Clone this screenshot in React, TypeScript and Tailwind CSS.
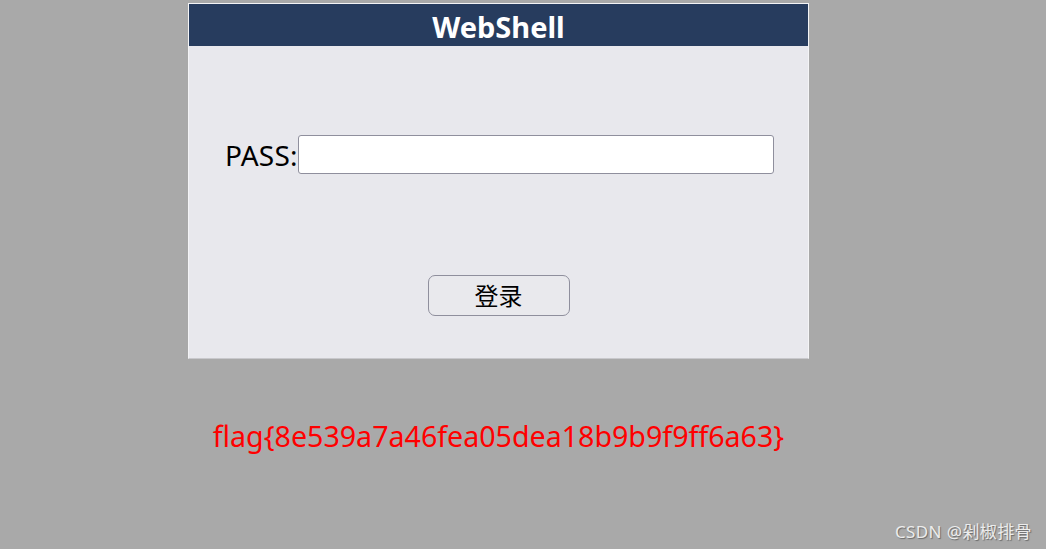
export default function App() {
  return (
    <div className="relative w-[1046px] h-[549px] overflow-hidden bg-[#a9a9a9] font-['Noto_Sans','Noto_Sans_CJK_SC',sans-serif]">
      <div className="ml-[188px] pt-[3px] w-[621px]">
        <div className="border border-[#f4f4f6] border-b-[#c8c8cc] bg-[#e8e8ed] h-[356px] flex flex-col">
          <div className="h-[42px] bg-[#273c5e] flex items-center justify-center">
            <h1 className="text-white font-bold text-[29px] leading-none pt-[2px]">WebShell</h1>
          </div>
          <div className="flex items-center pl-[36px] mt-[89px]">
            <span className="text-[28px] leading-none text-black tracking-[0.2px]">PASS:</span>
            <input
              type="password"
              className="w-[476px] h-[39px] bg-white border border-[#8f8f9d] rounded-[3px] outline-none"
            />
          </div>
          <div className="flex justify-center mt-[101px]">
            <button className="w-[142px] h-[41px] border border-[#8f8f9d] rounded-[7px] bg-[#e9e9ed] text-[24px] text-black leading-none">
              登录
            </button>
          </div>
        </div>
        <p className="mt-[63px] text-center text-[#ff0000] text-[28.6px] leading-none">
          flag{"{"}8e539a7a46fea05dea18b9b9f9ff6a63{"}"}
        </p>
      </div>
      <div className="absolute right-[14px] bottom-[9px] text-[17px] leading-none text-[#ececec] tracking-[0.4px] [text-shadow:1px_1px_1px_#6a6a6a]">
        CSDN @剁椒排骨
      </div>
    </div>
  );
}
